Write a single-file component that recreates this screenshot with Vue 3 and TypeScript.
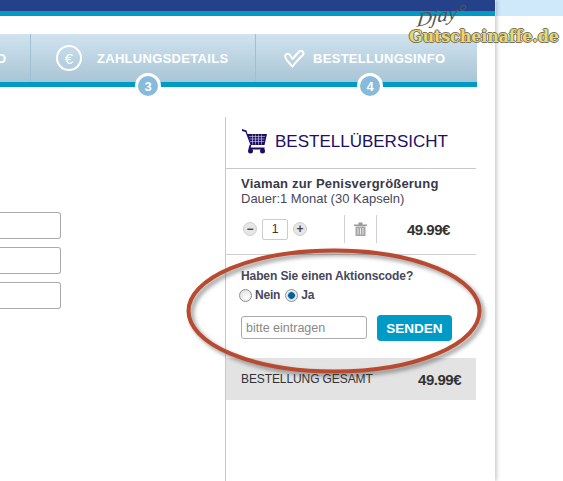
<script setup lang="ts">
// Checkout-Schritt mit Bestellübersicht; die Ellipse und das Wasserzeichen liegen über dem Inhalt.
const tabs = [
  { label: 'ZAHLUNGSDETAILS', step: 3, icon: 'euro' },
  { label: 'BESTELLUNGSINFO', step: 4, icon: 'check' },
]
</script>

<template>
  <div class="screen">
    <div class="sheet">
      <div class="bar"></div>

      <nav class="steps">
        <div class="tab stub"><span class="cut">O</span></div>
        <div v-for="t in tabs" :key="t.step" class="tab" :class="t.icon">
          <span v-if="t.icon === 'euro'" class="coin">€</span>
          <svg v-else class="tick" width="22" height="19" viewBox="0 0 22 19">
            <path d="M2.500 6C.5 8.500 6.500 14.500 9.500 17.500 13 13 17 8.500 20 6 21.500 3 18.500 .5 16 2.500L9.500 10 7 6C5.500 4 3.500 4.500 2.500 6Z" fill="none" stroke="#fff" stroke-width="2" stroke-linejoin="round" />
          </svg>
          <span class="label">{{ t.label }}</span>
          <span class="num">{{ t.step }}</span>
        </div>
      </nav>

      <main class="main">
        <div class="fields">
          <div class="field"></div>
          <div class="field"></div>
          <div class="field"></div>
        </div>

        <aside class="side">
          <h2 class="title">
            <svg width="25" height="25" viewBox="0 0 25 25">
              <path d="M0 0l4.500 1.500 1 3.500H25l-2.500 11H8.500L3.500 3 0 2z" fill="#1c0f66" />
              <path d="M7 7.500h16M7.500 10h15M8 12.500h14M10.500 5.500v10M13.500 5.500v10M16.500 5.500v10M19.500 5.500v10" stroke="#d8d4ee" stroke-width=".6" />
              <path d="M8.500 16l-1 3.500h15" fill="none" stroke="#1c0f66" stroke-width="1.800" />
              <circle cx="8.500" cy="22" r="2.500" fill="#1c0f66" />
              <circle cx="20.500" cy="22" r="2.500" fill="#1c0f66" />
            </svg>
            BESTELLÜBERSICHT
          </h2>

          <section class="item">
            <div class="name">Viaman zur Penisvergrößerung</div>
            <div class="dauer">Dauer:1 Monat (30 Kapseln)</div>
            <div class="line">
              <div class="qty">
                <span class="round">−</span>
                <span class="box">1</span>
                <span class="round">+</span>
              </div>
              <div class="trash">
                <svg width="13" height="14" viewBox="0 0 13 14">
                  <path d="M0 2.500h13v1.500H0zM4.500 2.500V.5h4v2" fill="#9a9a9a" />
                  <path d="M1.500 4.500h10v9.500h-10z" fill="#a5a5a5" />
                  <path d="M4 6v6.500M6.500 6v6.500M9 6v6.500" stroke="#e8e8e8" />
                </svg>
              </div>
              <div class="price">49.99€</div>
            </div>
          </section>

          <section class="promo">
            <div class="ask">Haben Sie einen Aktionscode?</div>
            <div class="radios">
              <label><input type="radio" name="code" />Nein</label>
              <label><input type="radio" name="code" checked />Ja</label>
            </div>
            <div class="enter">
              <input class="code" type="text" placeholder="bitte eintragen" />
              <button class="send" type="button">SENDEN</button>
            </div>
          </section>

          <div class="total">
            <span>BESTELLUNG GESAMT</span>
            <b>49.99€</b>
          </div>
        </aside>
      </main>
    </div>

    <div class="backdrop"></div>

    <svg class="ring" width="563" height="481" viewBox="0 0 563 481">
      <ellipse cx="334" cy="311" rx="145.500" ry="60.500" fill="none" stroke="#b84a30" stroke-width="4" />
    </svg>

    <div class="mark">
      <span class="sign">Djay°</span>
      <span class="brand">Gutscheinaffe.de</span>
    </div>
  </div>
</template>

<style>
html,
body {
  margin: 0;
  background: #fff;
}
</style>

<style scoped>
.screen {
  position: relative;
  display: flex;
  width: 563px;
  height: 481px;
  overflow: hidden;
  font-family: "Liberation Sans", Arial, sans-serif;
  color: #333;
  background: #fff;
}
.sheet {
  position: relative;
  z-index: 1;
  flex: none;
  width: 495px;
  height: 481px;
  background: #fff;
  box-shadow: 2px 0 4px rgba(0, 0, 0, 0.2);
}
.backdrop {
  flex: 1;
  height: 16px;
  margin-left: 1px;
  background: #cfe8fa;
}
.bar {
  height: 11px;
  background: #25418a;
  border-bottom: 5px solid #009ac7;
}
.steps {
  display: flex;
  width: 477px;
  height: 48px;
  margin-top: 18px;
  border-bottom: 5px solid #009ac7;
  background: linear-gradient(#d0e3ef, #a9c5d5);
}
.tab {
  position: relative;
  display: flex;
  align-items: center;
  box-sizing: border-box;
  border-right: 1px solid #9fc0d3;
  color: #fff;
  font-size: 13px;
  font-weight: 700;
  letter-spacing: 0.3px;
}
.stub {
  width: 31px;
}
.cut {
  margin-left: -4px;
}
.tab.euro {
  width: 225px;
  padding-left: 25px;
  gap: 15px;
}
.tab.check {
  width: 221px;
  border-right: 0;
  padding-left: 27px;
  gap: 8px;
}
.coin {
  display: flex;
  align-items: center;
  justify-content: center;
  box-sizing: border-box;
  width: 26px;
  height: 26px;
  border: 2px solid #fff;
  border-radius: 50%;
  font-size: 15px;
  font-weight: 400;
  letter-spacing: 0;
}
.tick {
  flex: none;
}
.num {
  position: absolute;
  top: 39px;
  display: flex;
  align-items: center;
  justify-content: center;
  width: 20px;
  height: 20px;
  border: 3px solid #fff;
  border-radius: 50%;
  background: #86bbdc;
  font-size: 13px;
  letter-spacing: 0;
}
.tab.euro .num {
  left: 104px;
}
.tab.check .num {
  left: 101px;
}
.main {
  display: flex;
  width: 476px;
  height: 394px;
  margin-top: 30px;
}
.fields {
  flex: none;
  box-sizing: border-box;
  width: 225px;
  padding-top: 95px;
}
.field {
  box-sizing: border-box;
  width: 61px;
  height: 27px;
  margin-bottom: 8px;
  border: 1px solid #aaa;
  border-left: 0;
  border-radius: 0 3px 3px 0;
}
.side {
  flex: 1;
  border-left: 1px solid #c8c8c8;
}
.title {
  display: flex;
  align-items: center;
  gap: 8px;
  box-sizing: border-box;
  height: 52px;
  margin: 0;
  padding: 0 0 2px 16px;
  border-bottom: 1px solid #c9c9c9;
  color: #1c0f66;
  font-size: 17px;
  font-weight: 400;
}
.item {
  box-sizing: border-box;
  height: 86px;
  padding: 7px 0 0 15px;
  border-bottom: 1px solid #d0d0d0;
}
.name {
  font-size: 13px;
  font-weight: 700;
  line-height: 15px;
  letter-spacing: 0.2px;
  color: #3a3a48;
}
.dauer {
  font-size: 13px;
  line-height: 15px;
  color: #48485a;
}
.line {
  display: flex;
  align-items: center;
  height: 28px;
  margin-top: 9px;
}
.qty {
  display: flex;
  align-items: center;
  gap: 5px;
  box-sizing: border-box;
  width: 103px;
  padding-left: 2px;
}
.round {
  display: flex;
  align-items: center;
  justify-content: center;
  width: 12px;
  height: 12px;
  border: 1px solid #cfcfcf;
  border-radius: 50%;
  background: #e6e6e6;
  color: #444;
  font-size: 12px;
  font-weight: 700;
  line-height: 1;
}
.box {
  box-sizing: border-box;
  width: 26px;
  height: 21px;
  border: 1px solid #ccc;
  border-radius: 2px;
  font-size: 12px;
  line-height: 19px;
  text-align: center;
}
.trash {
  display: flex;
  align-items: center;
  justify-content: center;
  box-sizing: border-box;
  width: 33px;
  height: 28px;
  border: solid #d2d2d2;
  border-width: 0 1px;
}
.price {
  margin-left: 30px;
  font-size: 15px;
  font-weight: 700;
  letter-spacing: -0.5px;
}
.promo {
  box-sizing: border-box;
  height: 103px;
  padding: 13px 0 0 15px;
}
.ask {
  font-size: 12px;
  font-weight: 700;
  line-height: 16px;
  letter-spacing: -0.1px;
  color: #48485a;
}
.radios {
  display: flex;
  gap: 7px;
  margin-top: 4px;
  font-size: 12px;
  font-weight: 700;
  letter-spacing: -0.2px;
  color: #48485a;
}
.radios label {
  display: flex;
  align-items: center;
  gap: 3px;
  line-height: 14px;
}
.radios input {
  appearance: none;
  width: 13px;
  height: 13px;
  margin: 0 0 0 -2px;
  border: 1px solid #8e8f8f;
  border-radius: 50%;
  background: radial-gradient(circle at 60% 65%, #fff, #d8d8d8);
}
.radios input:checked {
  background: radial-gradient(circle at 50% 50%, #0a5f96 0 3px, #7fc6ea 3.500px, #eee 4.500px);
}
.enter {
  display: flex;
  gap: 10px;
  margin-top: 14px;
}
.code {
  box-sizing: border-box;
  width: 126px;
  height: 23px;
  padding: 0 4px;
  border: 1px solid #aaa;
  border-radius: 3px;
  font-family: inherit;
  font-size: 12.500px;
}
.code::placeholder {
  color: #888;
}
.send {
  width: 75px;
  height: 26px;
  margin-top: -1px;
  border: 0;
  border-radius: 4px;
  background: #009ac7;
  color: #fff;
  font-family: inherit;
  font-size: 13.500px;
  font-weight: 700;
}
.total {
  display: flex;
  justify-content: space-between;
  align-items: center;
  height: 42px;
  padding: 0 15px;
  background: #e3e3e3;
  font-size: 12px;
  letter-spacing: -0.1px;
}
.total b {
  font-size: 15px;
  letter-spacing: -0.5px;
}
.ring {
  position: absolute;
  left: 0;
  top: 0;
  z-index: 2;
  filter: drop-shadow(3px 3px 2px rgba(60, 60, 60, 0.55));
}
.mark {
  position: absolute;
  left: 408px;
  top: 0;
  z-index: 3;
  width: 155px;
}
.sign {
  position: absolute;
  left: 10px;
  top: 4px;
  color: #555;
  font-family: "Liberation Serif", serif;
  font-style: italic;
  font-size: 20px;
  line-height: 22px;
  transform: skewX(-18deg) rotate(-12deg);
}
.brand {
  position: absolute;
  top: 28px;
  left: 1px;
  color: #ecd66e;
  font-family: "DejaVu Serif", serif;
  font-weight: 700;
  font-size: 16px;
  line-height: 18px;
  letter-spacing: -0.15px;
  white-space: nowrap;
  text-shadow: -1px 0 #77745a, 1px 0 #77745a, 0 -1px #77745a, 0 1px #77745a;
}
</style>
